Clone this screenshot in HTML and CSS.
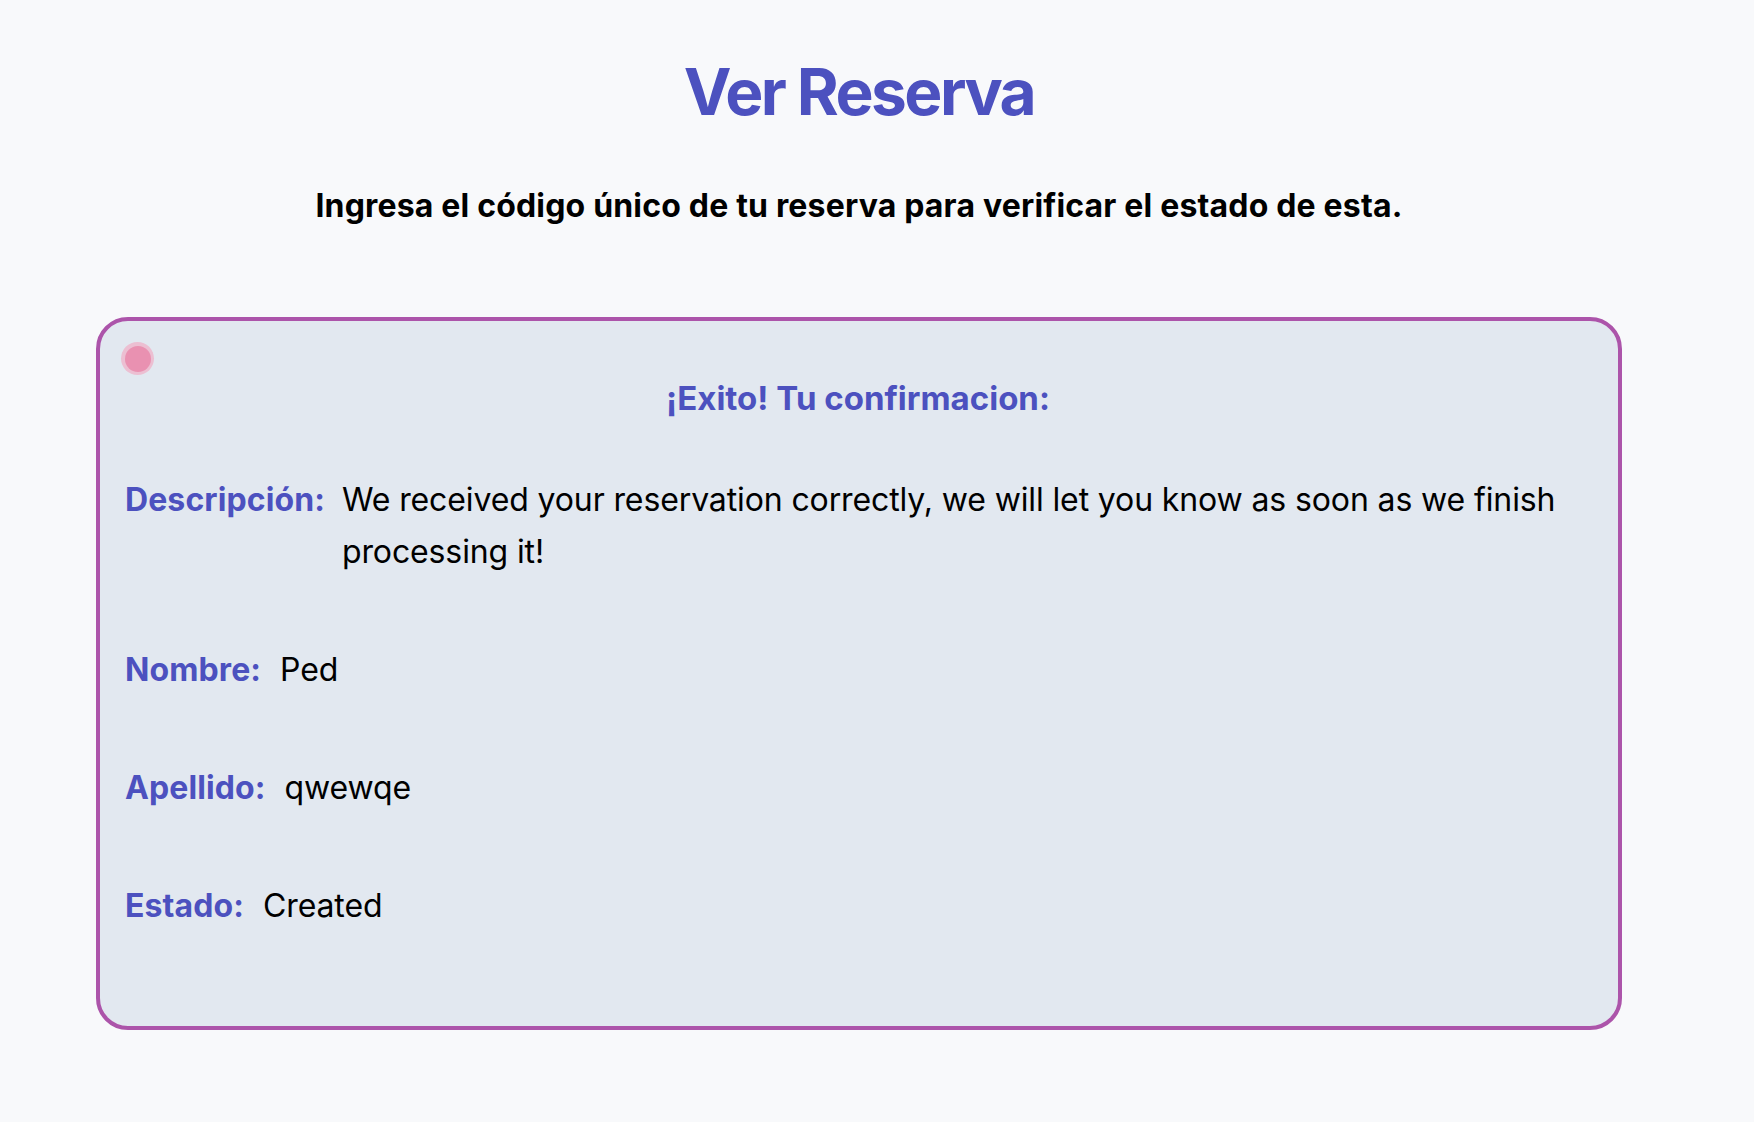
FILE: index.html
```html
<!DOCTYPE html>
<html lang="es">
<head>
<meta charset="utf-8">
<title>Ver Reserva</title>
<link rel="stylesheet" href="styles.css">
</head>
<body>
<main class="page">
  <h1 class="title">Ver Reserva</h1>
  <p class="subtitle">Ingresa el código único de tu reserva para verificar el estado de esta.</p>
  <section class="card">
    <span class="status-dot"><span class="status-dot-core"></span></span>
    <h2 class="card-heading">¡Exito! Tu confirmacion:</h2>
    <div class="details">
      <div class="row">
        <span class="label">Descripción:</span>
        <span class="value">We received your reservation correctly, we will let you know as soon as we finish processing it!</span>
      </div>
      <div class="row">
        <span class="label">Nombre:</span>
        <span class="value">Ped</span>
      </div>
      <div class="row">
        <span class="label">Apellido:</span>
        <span class="value">qwewqe</span>
      </div>
      <div class="row">
        <span class="label">Estado:</span>
        <span class="value">Created</span>
      </div>
    </div>
  </section>
</main>
</body>
</html>
```

FILE: styles.css
```css
html, body {
  margin: 0;
  padding: 0;
}

body {
  background: #f8f9fb;
  font-family: Inter, "Noto Sans", "Liberation Sans", sans-serif;
  color: #000;
}

.page {
  width: 1526px;
  margin-left: 96px;
  padding-top: 52px;
  padding-bottom: 40px;
  display: flex;
  flex-direction: column;
}

.title {
  margin: 0;
  font-size: 64px;
  line-height: 80px;
  font-weight: 700;
  color: #4c51bf;
  text-align: center;
  letter-spacing: -0.04em;
}

.subtitle {
  margin: 54px 0 0;
  font-size: 32px;
  line-height: 40px;
  font-weight: 700;
  text-align: center;
  letter-spacing: 0.18px;
}

.card {
  position: relative;
  margin-top: 91px;
  box-sizing: border-box;
  height: 713px;
  border: 4px solid #ac54aa;
  border-radius: 32px;
  background: #e2e8f0;
  padding: 57px 27px 0 25px;
}

.status-dot {
  position: absolute;
  left: 21px;
  top: 21px;
  width: 33px;
  height: 33px;
  border-radius: 50%;
  background: #ecbfd2;
  display: flex;
  align-items: center;
  justify-content: center;
}

.status-dot-core {
  width: 26px;
  height: 26px;
  border-radius: 50%;
  background: #e991b1;
}

.card-heading {
  margin: 0 0 56px;
  font-size: 33px;
  line-height: 40px;
  font-weight: 700;
  color: #4c51bf;
  text-align: center;
}

.details {
  display: flex;
  flex-direction: column;
  gap: 66px;
}

.row {
  display: flex;
  align-items: flex-start;
  font-size: 32px;
  line-height: 52px;
}

.label {
  flex: none;
  font-weight: 700;
  color: #4c51bf;
  letter-spacing: 0.1px;
}

.value {
  margin-left: 19px;
  font-weight: 400;
  letter-spacing: -0.12px;
}

.row:first-child .value {
  margin-left: 17px;
}
```
